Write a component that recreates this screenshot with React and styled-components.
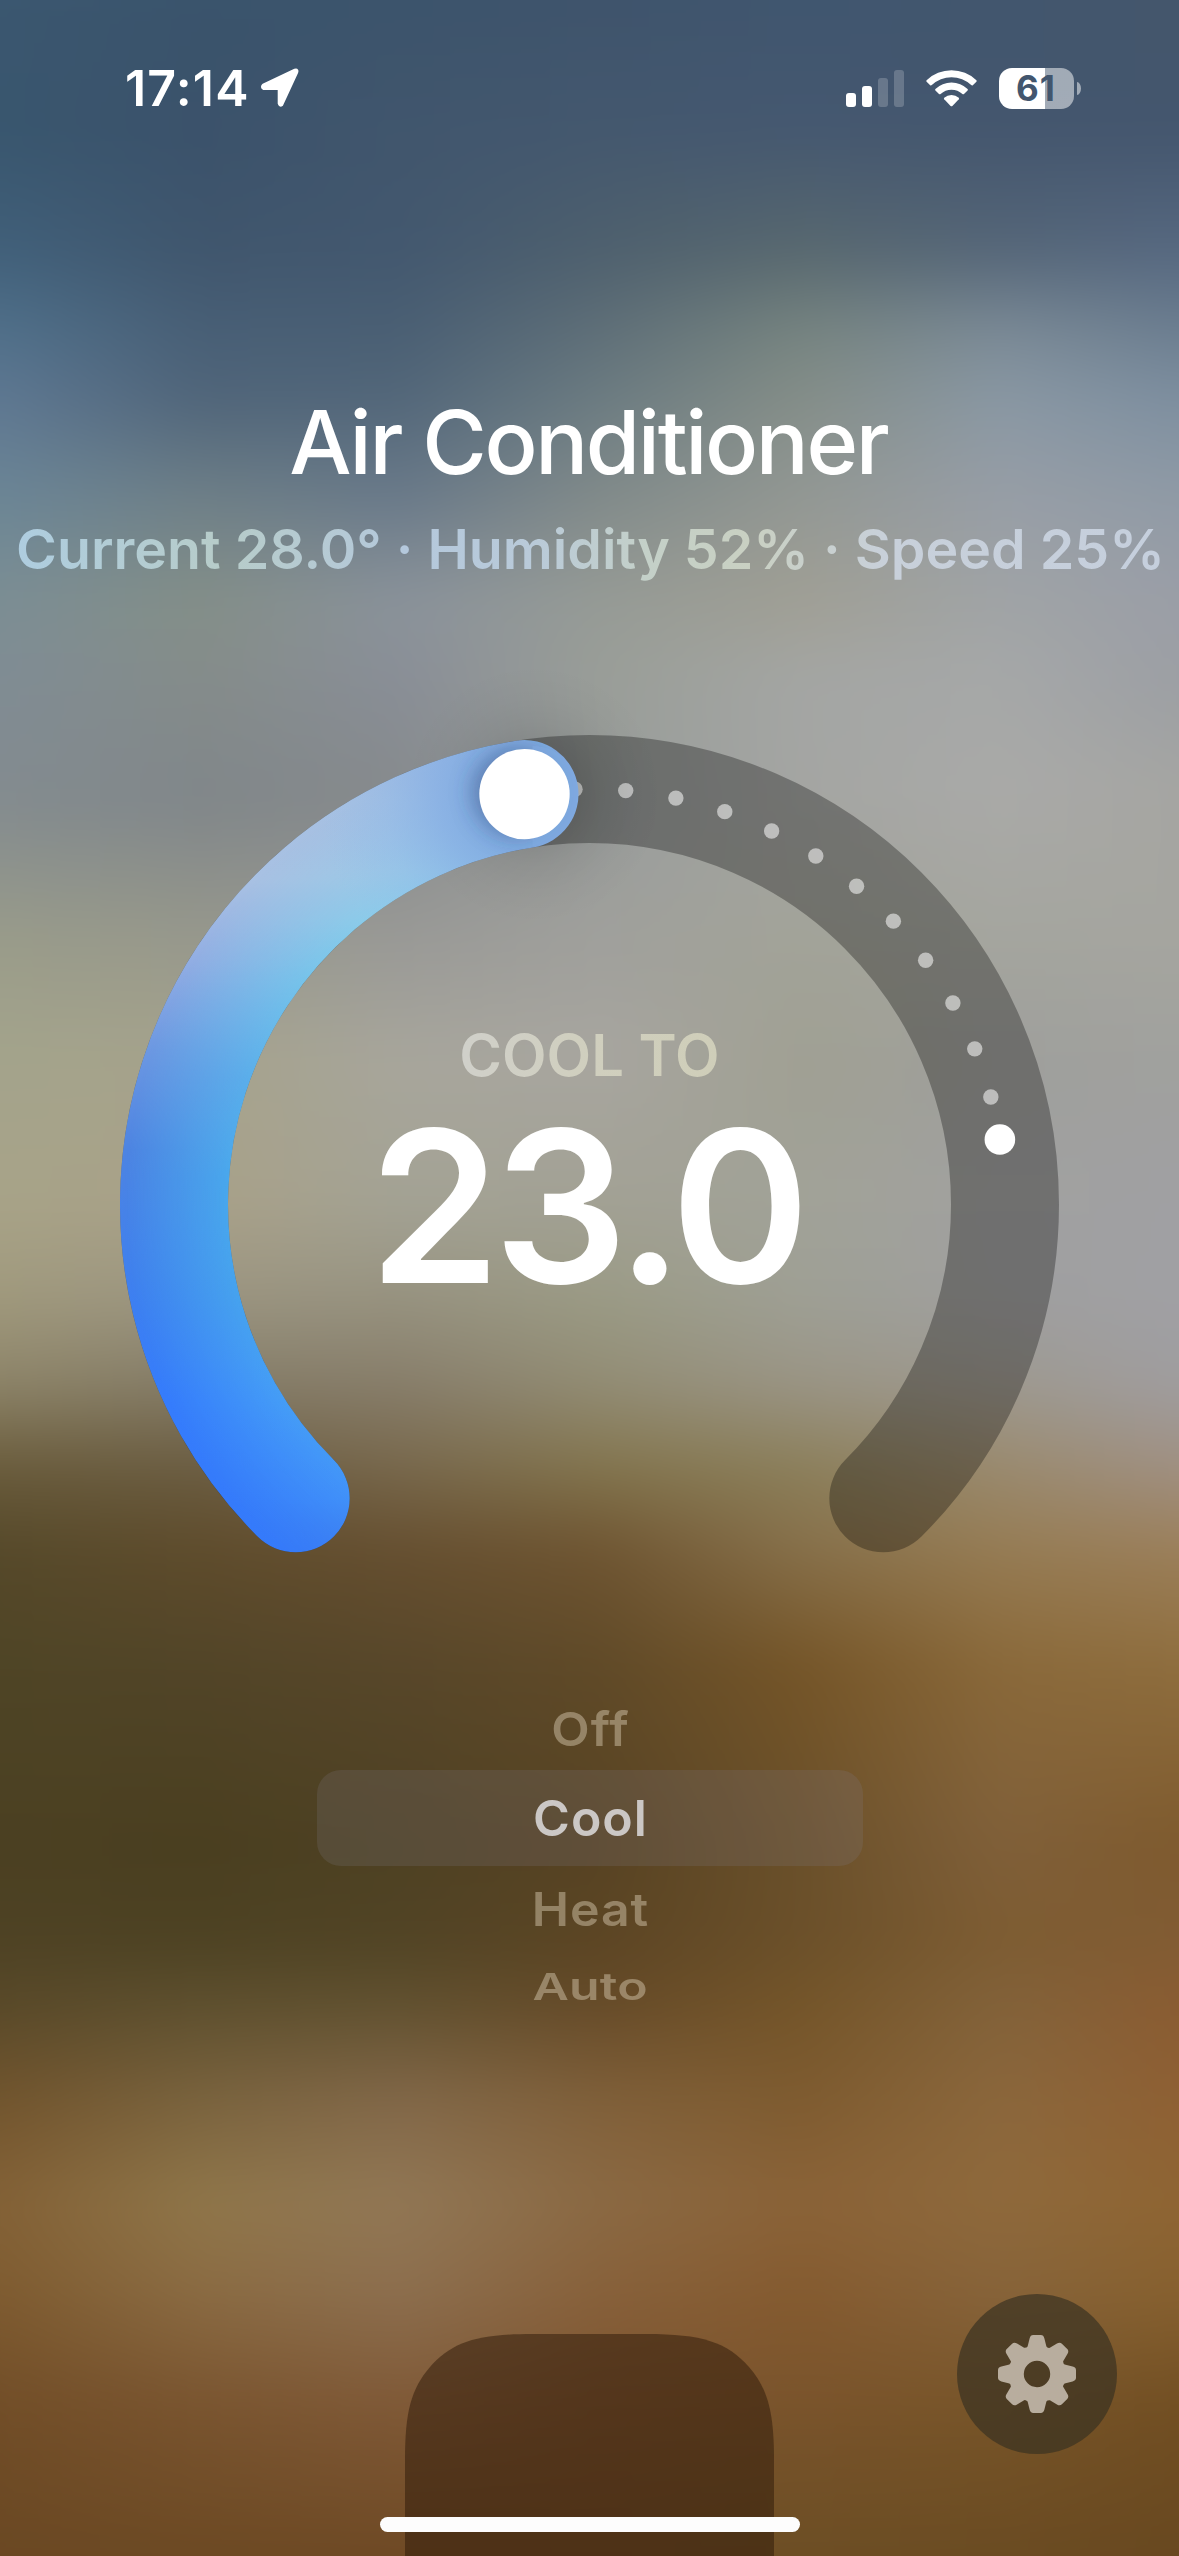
import React from 'react';
import styled, { createGlobalStyle, css } from 'styled-components';

const GlobalStyle = createGlobalStyle`
  * { box-sizing: border-box; }
  html, body { margin: 0; padding: 0; background: #4a4a3a; }
  body { overflow: hidden; }
`;

/* Wallpaper: rows of seven colours, faded into each other from top to bottom. */
const WALLPAPER = [
  [0, '#3b5770 #3a546c #3c546c #3f546c #40566f #42566e #44566c'],
  [130, '#39566e #3b526b #41566d #44586f #455870 #44566e #44566e'],
  [250, '#41607a #40566d #43586f #4e606e #58686f #556678 #566880'],
  [330, '#50708a #485f76 #4a5f74 #5f6f78 #768480 #7b8a96 #6c7e90'],
  [400, '#5f7892 #50657a #53677a #6c7c82 #858e88 #8a98a4 #7e8fa0'],
  [500, '#6c8696 #6f8088 #6a7a8a #828b8a #939894 #989ea6 #909ba6'],
  [600, '#7c8e94 #848f88 #8b939b #969b96 #a09f94 #a0a4a6 #9b9ea7'],
  [680, '#808c94 #858c8a #898e97 #9a9e98 #a4a6a4 #a6a8a8 #9c9fa4'],
  [800, '#838b8f #80868a #868a8c #989c9b #a4a5a2 #aaaaa8 #a6a6a2'],
  [945, '#9a9c8a #98998c #9a9a97 #a0a09c #a2a398 #a4a59e #a5a59f'],
  [1060, '#a4a48c #a6a38c #a8a69c #a8a6a0 #a0a093 #9f9f9c #a0a19e'],
  [1206, '#a8a388 #a9a188 #a3a294 #a2a194 #a1a298 #a1a1a0 #a0a0a3'],
  [1304, '#9f987c #9a9480 #96917e #9a9a84 #9e9f94 #9f9f9f #a0a0a4'],
  [1386, '#8c8368 #847b66 #877d6a #928c74 #9a9484 #9e998f #9f9d9f'],
  [1467, '#6a5c3c #6b5d42 #78684c #83754e #8b7f5a #9a8a6e #a09082'],
  [1549, '#56492a #5f4c2c #664f30 #6f5532 #87704a #967c54 #9b7f5a'],
  [1663, '#4f4526 #524528 #58472a #604a28 #755528 #8a693a #8f6e3e'],
  [1842, '#4b4022 #4a3f20 #4e4123 #574323 #6a502a #80603a #7e5a2e'],
  [1940, '#4e4224 #4d4223 #514425 #5c4524 #6b502a #7d5c32 #815c34'],
  [2000, '#584929 #5d4f2e #60502f #654a28 #745529 #82623a #8a5c32'],
  [2100, '#72552e #7a633e #826849 #80603a #7e5b30 #8b673c #8e6034'],
  [2200, '#846237 #90774a #927856 #8b6a44 #8b6338 #8f6a3c #8f6533'],
  [2300, '#7e5b30 #8a6a42 #8c6e4e #87603a #845a2f #86633a #86602f'],
  [2400, '#724e28 #7a5530 #805a38 #7c5430 #7a542c #785529 #724f23'],
  [2556, '#6a4823 #6c4923 #6e4924 #704b26 #6c4e24 #6a4b22 #684820'],
].map(([y, row]) => ({ y, colors: row.split(' ') }));

const COLUMN_X = [0, 200, 400, 600, 800, 1000, 1179];
const BLEED = 60;

const bandFill = ({ $colors }) =>
  `linear-gradient(90deg, ${$colors.map((c, i) => `${c} ${COLUMN_X[i] + BLEED}px`).join(', ')})`;

const Screen = styled.main`
  position: relative;
  isolation: isolate;
  width: 1179px;
  height: 2556px;
  overflow: hidden;
  display: flex;
  flex-direction: column;
  color: #fff;
  font-family: Inter, 'Liberation Sans', sans-serif;
`;

const Wallpaper = styled.div`
  position: absolute;
  inset: -${BLEED}px;
  z-index: -1;
  filter: blur(24px);
`;

const Band = styled.div`
  position: absolute;
  inset: 0;
  background: ${bandFill};
  ${({ $from, $to }) => $to > 0 && css`
    mask-image: linear-gradient(180deg, transparent ${$from + BLEED}px, #000 ${$to + BLEED}px);
  `}
`;

const Label = styled.span`
  display: block;
  white-space: nowrap;
  letter-spacing: ${({ $track = 0 }) => $track}px;
  margin-right: ${({ $track = 0 }) => -$track}px;
`;

/* Status bar */
const StatusBar = styled.header`
  height: 176px;
  padding: 0 98px 0 125px;
  display: flex;
  align-items: center;
  justify-content: space-between;
`;

const StatusGroup = styled.div`
  display: flex;
  align-items: center;
`;

const Clock = styled(Label)`
  font-size: 50px;
  font-weight: 600;
  line-height: 60px;
`;

const LocationIcon = styled.svg`
  display: block;
  width: 40px;
  height: 40px;
  margin-left: 12px;
`;

const Signal = styled.div`
  display: flex;
  align-items: flex-end;
  gap: 6px;
  height: 37px;
  margin-right: 22px;
`;

const SignalBar = styled.i`
  width: 10px;
  height: ${({ $h }) => $h}px;
  border-radius: 3px;
  background: rgba(255, 255, 255, ${({ $on }) => ($on ? 1 : 0.2)});
`;

const WifiIcon = styled.svg`
  display: block;
  width: 51px;
  height: 38px;
  margin-right: 22px;
`;

const Battery = styled.div`
  width: 75px;
  height: 41px;
  border-radius: 13px;
  display: grid;
  place-items: center;
  background: linear-gradient(90deg, #fff 46px, rgba(255, 255, 255, 0.5) 46px);
`;

const BatteryLevel = styled(Label)`
  color: #42566e;
  font-size: 35px;
  font-weight: 700;
  line-height: 41px;
  padding-right: 2px;
`;

const BatteryTip = styled.i`
  width: 4px;
  height: 13px;
  margin-left: 3px;
  border-radius: 0 4px 4px 0 / 0 6.5px 6.5px 0;
  background: rgba(255, 255, 255, 0.5);
`;

/* Title */
const TitleBlock = styled.section`
  padding-top: 216px;
  height: 559px;
  display: flex;
  flex-direction: column;
  align-items: center;
  gap: 22px;
`;

const Title = styled(Label)`
  font-size: 88px;
  font-weight: 500;
  line-height: 100px;
`;

const Subtitle = styled(Label)`
  font-size: 55.5px;
  font-weight: 600;
  line-height: 70px;
  padding-left: 2px;
  color: transparent;
  background: linear-gradient(90deg, #aecde0, #b7ccc9 18%, #b4c8dc 34%, #b9cad9 45%, #c4d0c8 55%, #c9d0c2 64%, #c8d0da 76%, #c5cfdd);
  background-clip: text;
  -webkit-background-clip: text;
`;

/* Dial */
const DialArea = styled.section`
  display: grid;
  width: 940px;
  height: 940px;
  margin: 0 auto;

  > * { grid-area: 1 / 1; }
`;

const DialRing = styled.svg`
  display: block;
  width: 940px;
  height: 940px;
  overflow: visible;
`;

const Reading = styled.div`
  display: flex;
  flex-direction: column;
  align-items: center;
  gap: 17px;
  padding-top: 285px;
`;

const Caption = styled(Label)`
  font-size: 58px;
  font-weight: 560;
  line-height: 70px;
  color: transparent;
  background: linear-gradient(90deg, #d0d0ca, #d0cfbf 45%, #cfceb9);
  background-clip: text;
  -webkit-background-clip: text;
`;

const Temperature = styled(Label)`
  font-size: 211px;
  font-weight: 600;
  line-height: 200px;
`;

/* Mode picker */
const Picker = styled.ul`
  list-style: none;
  width: 546px;
  height: 334px;
  margin: 13px auto 0;
  padding: 0;
  display: grid;
  grid-template-rows: 82px 96px 86px 70px;
`;

const Mode = styled.li`
  display: grid;
  place-items: center;
  padding-left: 1px;
  border-radius: 24px;
  font-size: 50px;
  font-weight: 600;
  line-height: 60px;
  color: ${({ $selected }) => ($selected ? '#cbc7c5' : 'rgba(208, 194, 168, 0.5)')};
  background: ${({ $selected }) => ($selected ? 'rgba(128, 124, 138, 0.2)' : 'none')};
`;

const ModeName = styled(Label)`
  transform: scaleY(${({ $squash }) => $squash});
`;

/* Bottom */
const Bottom = styled.footer`
  flex: 1;
  display: grid;
  grid-template-columns: 1fr 369px 1fr;
`;

const Dock = styled.svg`
  grid-column: 2;
  display: block;
  align-self: end;
  width: 369px;
  height: 222px;
`;

const SettingsButton = styled.button`
  grid-column: 3;
  align-self: end;
  justify-self: end;
  width: 160px;
  height: 160px;
  margin: 0 62px 102px 0;
  padding: 0;
  border: 0;
  border-radius: 50%;
  display: grid;
  place-items: center;
  background: rgba(56, 49, 33, 0.69);
`;

const GearIcon = styled.svg`
  display: block;
  width: 78px;
  height: 78px;
`;

const HomeIndicator = styled.div`
  position: absolute;
  left: 380px;
  bottom: 24px;
  width: 420px;
  height: 15px;
  border-radius: 8px;
  background: #fdfdfd;
`;

const RADIUS = 415.5;
const CENTER = 470;
const polar = (deg, r = RADIUS) => {
  const a = (deg * Math.PI) / 180;
  return [CENTER + r * Math.cos(a), CENTER + r * Math.sin(a)];
};
const arc = (from, to) => {
  const [x1, y1] = polar(from);
  const [x2, y2] = polar(to);
  return `M${x1} ${y1}A${RADIUS} ${RADIUS} 0 ${to - from > 180 ? 1 : 0} 1 ${x2} ${y2}`;
};
const START = 135;
const END = 405;
const TARGET = 261;
const CURRENT = 351;

const Stops = ({ list }) => list.map(([y, c]) => <stop key={y} offset={y / 940} stopColor={c} />);

const OUTER = [[0, '#9bb8e2'], [65, '#a6c0e2'], [145, '#a8c1e3'], [225, '#92aee3'], [315, '#6c98e2'], [415, '#4d84e2'], [545, '#3f80ee'], [665, '#357cfc'], [817, '#357afa']];
const INNER = [[65, '#92c0ea'], [135, '#97cbe8'], [185, '#8bcbe9'], [245, '#76c3ea'], [345, '#5aaeea'], [445, '#49a7ec'], [565, '#46a2ee'], [665, '#459df6'], [765, '#4395f8'], [817, '#4386ea']];

function Dial() {
  const [kx, ky] = polar(TARGET);
  const [cx, cy] = polar(CURRENT);
  const ticks = Array.from({ length: 11 }, (_, i) => 345 - i * 7).concat(268);
  return (
    <DialRing viewBox="0.5 0.5 940 940">
      <defs>
        <linearGradient id="outer" gradientUnits="userSpaceOnUse" x1="0" y1="0" x2="0" y2="940"><Stops list={OUTER} /></linearGradient>
        <linearGradient id="inner" gradientUnits="userSpaceOnUse" x1="0" y1="0" x2="0" y2="940"><Stops list={INNER} /></linearGradient>
        <radialGradient id="inward" gradientUnits="userSpaceOnUse" cx="470" cy="470" r="470">
          <stop offset="0.77" stopColor="#fff" />
          <stop offset="0.99" stopColor="#000" />
        </radialGradient>
        <radialGradient id="tip" gradientUnits="userSpaceOnUse" cx={kx + 10} cy={ky} r="215">
          <stop offset="0.25" stopColor="#7faae0" />
          <stop offset="0.45" stopColor="#85aee4" stopOpacity="0.72" />
          <stop offset="0.7" stopColor="#8cb6e8" stopOpacity="0.32" />
          <stop offset="1" stopColor="#92bce8" stopOpacity="0" />
        </radialGradient>
        <radialGradient id="halo" gradientUnits="userSpaceOnUse" cx={kx + 10} cy={ky} r="130">
          <stop offset="0.35" stopColor="#000" stopOpacity="0.1" />
          <stop offset="0.55" stopColor="#000" stopOpacity="0.05" />
          <stop offset="0.75" stopColor="#000" stopOpacity="0.02" />
          <stop offset="1" stopColor="#000" stopOpacity="0" />
        </radialGradient>
        <mask id="inwardMask" maskUnits="userSpaceOnUse" x="0" y="0" width="940" height="940">
          <rect width="940" height="940" fill="url(#inward)" />
        </mask>
        <mask id="fillMask" maskUnits="userSpaceOnUse" x="0" y="0" width="940" height="940">
          <path d={arc(START, TARGET)} fill="none" stroke="#fff" strokeWidth="108" strokeLinecap="round" />
        </mask>
        <filter id="knobShadow" x="-50%" y="-50%" width="200%" height="200%">
          <feGaussianBlur stdDeviation="11" />
        </filter>
      </defs>
      <path d={arc(START, END)} fill="none" stroke="#000" strokeOpacity="0.3" strokeWidth="108" strokeLinecap="round" />
      {ticks.map((deg) => {
        const [x, y] = polar(deg);
        return <circle key={deg} cx={x} cy={y} r="7.7" fill="#fff" fillOpacity="0.54" />;
      })}
      <circle cx={kx + 10} cy={ky} r="130" fill="url(#halo)" />
      <g mask="url(#fillMask)">
        <rect width="940" height="940" fill="url(#outer)" />
        <rect width="940" height="940" fill="url(#inner)" mask="url(#inwardMask)" />
        <rect width="940" height="940" fill="url(#tip)" />
        <circle cx={kx - 9} cy={ky - 2} r="43" fill="#2a4270" fillOpacity="0.45" filter="url(#knobShadow)" />
        <circle cx={kx + 8} cy={ky + 2} r="50" fill="#7faae0" fillOpacity="0.55" clipPath="inset(0 0 0 50%)" />
      </g>
      <circle cx={kx} cy={ky} r="45.2" fill="#fff" />
      <circle cx={cx} cy={cy} r="15.3" fill="#fff" />
    </DialRing>
  );
}

const gearPath = () => {
  const tooth = [[-9.4, -27.6], [-7.4, -35.6], [-6.6, -39], [-3.8, -39], [3.8, -39], [6.6, -39], [7.4, -35.6], [9.4, -27.6], [11.2, -25.6]];
  let d = '';
  for (let i = 0; i < 8; i += 1) {
    const a = (i * Math.PI) / 4;
    const p = tooth.map(([x, y]) =>
      `${(39 + x * Math.cos(a) - y * Math.sin(a)).toFixed(2)} ${(39 + x * Math.sin(a) + y * Math.cos(a)).toFixed(2)}`);
    const b = a + Math.PI / 4;
    const nx = (39 - 9.4 * Math.cos(b) + 27.6 * Math.sin(b)).toFixed(2);
    const ny = (39 - 9.4 * Math.sin(b) - 27.6 * Math.cos(b)).toFixed(2);
    d += `${i ? 'L' : 'M'}${p[0]}L${p[1]}Q${p[2]} ${p[3]}L${p[4]}Q${p[5]} ${p[6]}L${p[7]}Q${p[8]} ${nx} ${ny}`;
  }
  return `${d}ZM39 25.8a13.2 13.2 0 1 0 0 26.4a13.2 13.2 0 1 0 0 -26.4Z`;
};

const MODES = [
  { name: 'Off', track: 1.2, squash: 0.935 },
  { name: 'Cool', track: 1, selected: true, squash: 1 },
  { name: 'Heat', track: 0.9, squash: 0.925 },
  { name: 'Auto', track: 0.2, squash: 0.745 },
];

export default function App() {
  return (
    <Screen>
      <GlobalStyle />
      <Wallpaper>
        {WALLPAPER.map(({ y, colors }, i) => (
          <Band key={y} $colors={colors} $from={i ? WALLPAPER[i - 1].y : 0} $to={y} />
        ))}
      </Wallpaper>

      <StatusBar>
        <StatusGroup>
          <Clock $track={1.2}>17:14</Clock>
          <LocationIcon viewBox="0 0 40 40">
            <path d="M3.4 17.3L35 2.4Q37.6 1.6 36.4 4.6L21.6 36.6Q20 37.6 19.4 35.4V20.4H3.8Q1.8 19.2 3.4 17.3Z" fill="#fff" stroke="#fff" strokeWidth="3.4" strokeLinejoin="round" />
          </LocationIcon>
        </StatusGroup>
        <StatusGroup>
          <Signal>
            <SignalBar $h={14} $on />
            <SignalBar $h={21} $on />
            <SignalBar $h={29} />
            <SignalBar $h={37} />
          </Signal>
          <WifiIcon viewBox="0 0 51 38">
            <g fill="#fff">
              <path d="M0.6 11.2A36 36 0 0 1 50.4 11.2Q51 12 50.4 12.7L46.8 16.2Q46 16.8 45.2 16.1A28.6 28.6 0 0 0 5.8 16.1Q5 16.8 4.2 16.2L0.6 12.7Q0 12 0.6 11.2Z" />
              <path d="M9.4 20A23.4 23.4 0 0 1 41.6 20Q42.2 20.7 41.6 21.4L38 25Q37.2 25.6 36.4 25A16 16 0 0 0 14.6 25Q13.8 25.6 13 25L9.4 21.4Q8.8 20.7 9.4 20Z" />
              <path d="M18.2 28.8A11 11 0 0 1 32.8 28.8Q33.4 29.5 32.8 30.2L26.4 36.9Q25.5 37.7 24.6 36.9L18.2 30.2Q17.6 29.5 18.2 28.8Z" />
            </g>
          </WifiIcon>
          <Battery>
            <BatteryLevel $track={1}>61</BatteryLevel>
          </Battery>
          <BatteryTip />
        </StatusGroup>
      </StatusBar>

      <TitleBlock>
        <Title $track={-2.35}>Air Conditioner</Title>
        <Subtitle>Current 28.0° · Humidity 52% · Speed 25%</Subtitle>
      </TitleBlock>

      <DialArea>
        <Dial />
        <Reading>
          <Caption>COOL TO</Caption>
          <Temperature $track={-7}>23.0</Temperature>
        </Reading>
      </DialArea>

      <Picker>
        {MODES.map((m) => (
          <Mode key={m.name} $selected={m.selected}>
            <ModeName $track={m.track} $squash={m.squash}>{m.name}</ModeName>
          </Mode>
        ))}
      </Picker>

      <Bottom>
        <Dock viewBox="0 0 369 222">
          <path d="M0 222V126C0 78 6 55 25 33C47 8 72 0 128 0H241C297 0 322 8 344 33C363 55 369 78 369 126V222Z" fill="#2b1807" fillOpacity="0.5" />
        </Dock>
        <SettingsButton aria-label="Settings">
          <GearIcon viewBox="0 0 78 78">
            <path d={gearPath()} fill="#b8ad9e" fillRule="evenodd" />
          </GearIcon>
        </SettingsButton>
      </Bottom>
      <HomeIndicator />
    </Screen>
  );
}
